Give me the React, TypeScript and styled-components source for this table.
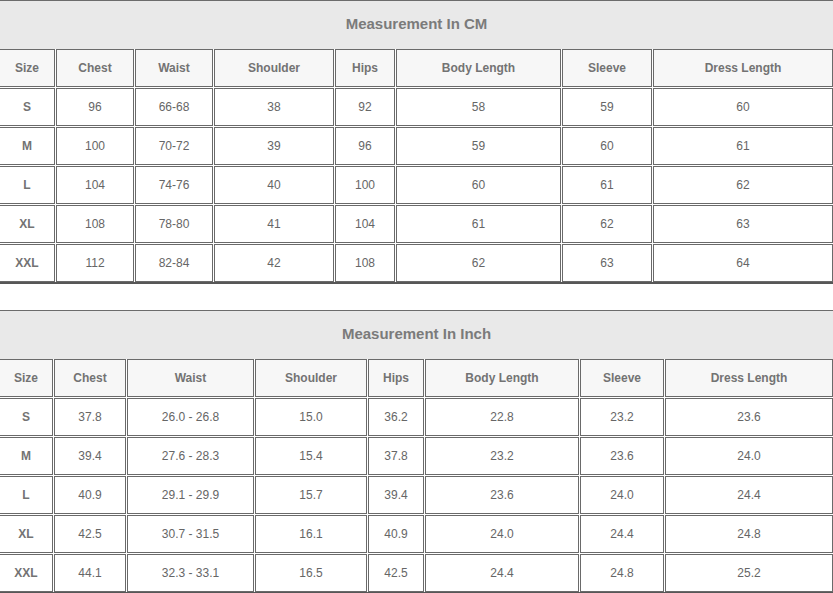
import styled, { createGlobalStyle } from "styled-components";

const GlobalStyle = createGlobalStyle`
  html, body {
    margin: 0;
    padding: 0;
    overflow: hidden;
    background: #ffffff;
  }
  body {
    font-family: "Liberation Sans", Arial, sans-serif;
  }
`;

const Page = styled.div`
  display: flex;
  flex-direction: column;
  gap: 26px;
  width: 833px;
`;

const Section = styled.section`
  display: flex;
  flex-direction: column;
  border-top: 1px solid #6c6c6c;
  border-bottom: 2px solid #575757;
`;

const Caption = styled.div`
  height: 48px;
  box-sizing: border-box;
  padding-bottom: 3px;
  display: flex;
  align-items: center;
  justify-content: center;
  background-color: #e9e9e9;
  color: #7b7b7b;
  font-size: 15px;
  font-weight: bold;
`;

const Grid = styled.div<{ $cols: string }>`
  display: grid;
  grid-template-columns: ${(p) => p.$cols};
  grid-auto-rows: 38px;
  gap: 1px;
`;

const Cell = styled.div<{ $head?: boolean; $first?: boolean }>`
  display: flex;
  align-items: center;
  justify-content: center;
  box-sizing: border-box;
  border: 1px solid #6a6a6a;
  border-left: ${(p) => (p.$first ? "none" : "1px solid #6a6a6a")};
  background-color: ${(p) => (p.$head ? "#f7f7f7" : "#ffffff")};
  color: ${(p) => (p.$head || p.$first ? "#737373" : "#666666")};
  font-size: 12px;
  font-weight: ${(p) => (p.$head || p.$first ? "bold" : "normal")};
`;

const headers = ["Size", "Chest", "Waist", "Shoulder", "Hips", "Body Length", "Sleeve", "Dress Length"];

const cmRows = [
  ["S", "96", "66-68", "38", "92", "58", "59", "60"],
  ["M", "100", "70-72", "39", "96", "59", "60", "61"],
  ["L", "104", "74-76", "40", "100", "60", "61", "62"],
  ["XL", "108", "78-80", "41", "104", "61", "62", "63"],
  ["XXL", "112", "82-84", "42", "108", "62", "63", "64"],
];

const inchRows = [
  ["S", "37.8", "26.0 - 26.8", "15.0", "36.2", "22.8", "23.2", "23.6"],
  ["M", "39.4", "27.6 - 28.3", "15.4", "37.8", "23.2", "23.6", "24.0"],
  ["L", "40.9", "29.1 - 29.9", "15.7", "39.4", "23.6", "24.0", "24.4"],
  ["XL", "42.5", "30.7 - 31.5", "16.1", "40.9", "24.0", "24.4", "24.8"],
  ["XXL", "44.1", "32.3 - 33.1", "16.5", "42.5", "24.4", "24.8", "25.2"],
];

interface ISizeTable {
  title: string;
  cols: string;
  rows: string[][];
}
function SizeTable({ title, cols, rows }: ISizeTable) {
  return (
    <Section>
      <Caption>{title}</Caption>
      <Grid $cols={cols}>
        {headers.map((h, i) => (
          <Cell key={h} $head $first={i === 0}>{h}</Cell>
        ))}
        {rows.map((row) =>
          row.map((v, i) => (
            <Cell key={row[0] + i} $first={i === 0}>{v}</Cell>
          ))
        )}
      </Grid>
    </Section>
  );
}

function App() {
  return (
    <>
      <GlobalStyle />
      <Page>
        <SizeTable
          title="Measurement In CM"
          cols="55px 78px 78px 120px 60px 165px 90px 180px"
          rows={cmRows}
        />
        <SizeTable
          title="Measurement In Inch"
          cols="53px 72px 127px 112px 56px 154px 84px 168px"
          rows={inchRows}
        />
      </Page>
    </>
  );
}

export default App;
